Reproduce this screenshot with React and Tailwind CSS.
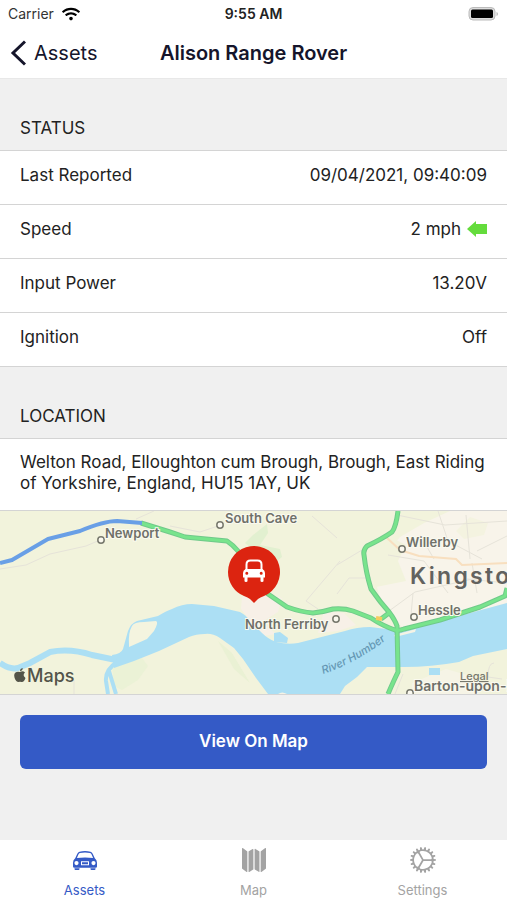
import { FaWifi } from "react-icons/fa";
import { IoIosCog, IoIosMap } from "react-icons/io";

const CarIcon = ({ className }) => (
  <svg className={className} viewBox="0 0 32 32" fill="currentColor" aria-hidden="true">
    <path
      fillRule="evenodd"
      d="M10.500 7.700Q16 6.300 21.500 7.700q1.500.5 2.300 2.300l2 4.300q2.200 1.700 2.200 4.500v3.700q0 1.300-1.500 1.300H5.500Q4 23.800 4 22.500v-3.700q0-2.800 2.200-4.500l2-4.300q.8-1.800 2.300-2.300zm.4 1.400q-1 .3-1.500 1.400l-1.500 3.400q8.100-1 16.200 0l-1.500-3.400q-.5-1.100-1.500-1.400-5.100-1-10.200 0zM7.500 17a2.100 2.100 0 1 0 0 4.200 2.100 2.100 0 0 0 0-4.200zm17 0a2.100 2.100 0 1 0 0 4.200 2.100 2.100 0 0 0 0-4.200zM12 17.200v4h8v-4zm1 1h6v2h-6z"
    />
    <path d="M5.500 24.300h5v.7q0 1-1 1h-3q-1 0-1-1zm16 0h5v.7q0 1-1 1h-3q-1 0-1-1z" />
  </svg>
);

const statusRows = [
  { label: "Last Reported", value: "09/04/2021, 09:40:09" },
  { label: "Speed", value: "2 mph", heading: true },
  { label: "Input Power", value: "13.20V" },
  { label: "Ignition", value: "Off" },
];

const tabs = [
  { name: "Assets", icon: CarIcon, active: true },
  { name: "Map", icon: IoIosMap },
  { name: "Settings", icon: IoIosCog },
];

const towns = [
  { name: "Newport", cx: 101, cy: 29, x: 105, y: 27 },
  { name: "South Cave", cx: 220, cy: 14, x: 225, y: 12 },
  { name: "North Ferriby", cx: 336, cy: 108, x: 245, y: 118 },
  { name: "Willerby", cx: 402, cy: 38, x: 406, y: 36 },
  { name: "Hessle", cx: 414, cy: 106, x: 418, y: 104 },
  { name: "Barton-upon-Humber", cx: 410, cy: 182, x: 414, y: 180, large: true },
];

const motorway =
  "M141 12l29 9 15 5 42 4q6 4 11 10l30 43 19 13q14 5 26 6 10-1 20-4 11-1 20 2l18 7q12 8 24 12 4 1 9-1l36-9 40-13 25-11 2-8";
const bridgeRoad =
  "M398 0q-2 16-6 21-10 7-25 14-4 4-3 9 2 18 7 34 9 13 18 23 6 8 8 14l1 46q-4 8-10 22M389 102l-8 6";

const StatusBar = () => (
  <div className="grid h-7 grid-cols-3 items-center px-2 text-sm">
    <span className="flex items-center gap-2 text-[#333]">
      Carrier
      <FaWifi className="h-4 w-[18px] text-black" />
    </span>
    <span className="text-center font-semibold text-[#222]">9:55 AM</span>
    <svg className="h-4 w-8 justify-self-end" viewBox="0 0 32 16" aria-label="Battery">
      <rect x="2" y="1.500" width="26" height="12.500" rx="4" fill="#ddd" stroke="#bbb" strokeWidth="1" />
      <rect x="4" y="3.500" width="22" height="8.500" rx="1.500" fill="#000" />
      <path d="M29.500 6v4q1.500-.6 1.500-2t-1.500-2z" fill="#bbb" />
    </svg>
  </div>
);

const SectionTitle = ({ children }) => (
  <h2 className="px-5 pt-[37px] pb-[10px] text-[17px] leading-6 text-[#222]">{children}</h2>
);

const CarPin = () => (
  <g>
    <path d="M228 61a26 26 0 1 1 36 24q-4 1.500-6 3l-4 4-4-4q-2-1.500-6-3a26 26 0 0 1-16-24z" fill="#dc2410" />
    <path
      d="M246.500 59v-5.500q0-4 4-4h7q4 0 4 4V59"
      fill="none"
      stroke="#fff"
      strokeWidth="2"
    />
    <path
      fill="#fff"
      fillRule="evenodd"
      d="M245.500 58h17q2.500 1.500 2.500 4v4.500h-1.500v3.500q0 1-1.500 1t-1.500-1v-3.500h-13v3.500q0 1-1.500 1t-1.500-1v-3.500H243V62q0-2.500 2.500-4zm1.300 2.800a1.500 1.500 0 1 0 0 3 1.500 1.500 0 0 0 0-3zm14.400 0a1.500 1.500 0 1 0 0 3 1.500 1.500 0 0 0 0-3z"
    />
  </g>
);

const AssetMap = () => (
  <svg
    className="block h-[183px] w-full"
    viewBox="0 0 507 183"
    preserveAspectRatio="xMidYMid slice"
    role="img"
    aria-label="Map of the asset location"
  >
    <rect width="507" height="183" fill="#f2f3dc" />

    {/* built up areas and woodland */}
    <path d="M400 26l24-14 26-12h57v92l-100 28-12-10-16-26-6-24 10-14z" fill="#f8f4ea" />
    <path d="M366 40l24-14 16 8-8 16 8 20-30 6z" fill="#f2f3dc" />
    <path d="M456 20l14-14 18 6-4 12-20 4z" fill="#f4f3e0" />
    <path d="M242 86l20-5 20 6-4 14-16 10 14 12-12 2-16-18-7-9zM324 100l20 2 12 12-18 6-20 2z" fill="#f7f0e7" />
    <path d="M412 172l34-14 28 8 6 17h-68z" fill="#f6f4e6" />
    <path d="M245 32l8-8 14-11 1 9-8 12 20 4 2 8-10 8z" fill="#e2f0d0" />
    <path d="M112 155l30-8 6 8-10 14-16 10-8-4z" fill="#ebf2d6" />
    <path d="M218 130l14 12 18 30-16-14z" fill="#eaf1d4" />

    {/* minor roads */}
    <g fill="none" stroke="#e6e3d9" strokeWidth="1">
      <path d="M0 58l26-4 24-11 36-8 14-6M136 8l18-8M170 15l30 6 18-6M312 5l25 22M340 50l-34 40 12 8" />
      <path d="M337 54l50-30M337 83l12-16h22M397 4l48 10 62-4M388 44l36 6 24 32M420 24l14 24M438 0l10 30 34 18M466 4l4 44M507 25l-30 15M389 100l26-19 62-14M413 82l-2 22M477 82l-5-30M507 72l-40-4" />
      <path d="M395 183l8-20M494 152q-6 0-6 14l14 2M74 169v14" />
    </g>
    <path d="M386 26l14 13 19 6 37 3 6 6 45-2" fill="none" stroke="#f8dfbf" strokeWidth="2" />

    {/* estuary with its island and side channels */}
    <path
      d="M112 144q9-1 11-6l5-18q3-8 9-10l21-5q8-5 14-7 10-5 20-5l22 2 26 6q6 3 9 8l13 13q6 6 14 9 12 3 22 1l47-12q12-4 25-4l25 3 15-1 60-16 37-10v46l-34 7-14 6q-28 5-55 5h-37l-10 10-12 9-5 8h-72l-12-16-13-19-9-11-14-10q-8-5-15-4-9 0-16 3l-30 14-25 10-20 7z"
      fill="#acdff4"
    />
    <path d="M129 134q-1-12 3-19 2-4 12-4l12-1q3 1-2 10l-7 8q-9 4-18 8z" fill="#f4f4df" />
    <g fill="none" stroke="#acdff4">
      <path d="M0 152q10 7 18 5l12-5 20-11q20-4 42 3l24 5" strokeWidth="6" />
      <path d="M117 151q-12 8-11 19l2 13M109 160l7 23" strokeWidth="4" />
    </g>
    <path d="M274 122l6-1 8 6-1 5-13-1zM429 157h11v7h-11z" fill="#acdff4" />
    <path d="M278 183q4-3 9 0zM394 124l22-6-1 3-20 5z" fill="#f5f3e5" />

    {/* main roads */}
    <g fill="none" strokeLinejoin="round">
      <g stroke="#70c98a" strokeWidth="5">
        <path d={motorway} />
        <path d={bridgeRoad} />
      </g>
      <g stroke="#78e48c" strokeWidth="3">
        <path d={motorway} />
        <path d={bridgeRoad} />
      </g>
      <path d="M376 107l6 1" stroke="#f4cc5e" strokeWidth="4" />
      <path d="M0 52l12-3 36-21 32-8q24-10 37-10l25 2" stroke="#699fe6" strokeWidth="4" />
    </g>

    {towns.map((town) => (
      <g key={town.name}>
        <circle cx={town.cx} cy={town.cy} r="3.200" fill="#fbf9ef" stroke="#77786d" strokeWidth="1.500" />
        <text
          x={town.x}
          y={town.y}
          className={`fill-[#6f7069] stroke-[#fafaf0] stroke-2 font-semibold [paint-order:stroke] ${town.large ? "text-sm" : "text-[13px]"}`}
        >
          {town.name}
        </text>
      </g>
    ))}
    <text x="410" y="73" className="fill-[#62625f] text-[23px] font-semibold tracking-widest">
      Kingston upon Hull
    </text>
    <path id="humber" d="M323 163q31-10 62-33" fill="none" />
    <text className="fill-[#6497b3] text-[11px] font-medium italic">
      <textPath href="#humber">River Humber</textPath>
    </text>

    <CarPin />

    <path
      transform="translate(14 157)"
      fill="#535449"
      d="M6 4q3-1.500 5 .5-3 2.500.5 5.500-1.500 4.500-4 4-1.500-.6-3 0Q2 14 .6 10-.8 5 2.600 4q1.400-.4 3.400 0zM6 3.200Q6 .5 8.700 0 8.800 2.700 6 3.200z"
    />
    <text x="27" y="171" className="fill-[#535449] text-lg font-medium">Maps</text>
    <a href="#legal">
      <text x="460" y="169" className="fill-[#77786d] text-[11px] font-medium underline">Legal</text>
    </a>
  </svg>
);

const App = () => {
  return (
    <div className="flex min-h-screen flex-col bg-[#f0f0f0] font-['Inter',sans-serif]">
      <header className="border-b border-[#e8e8e8] bg-white">
        <StatusBar />
        <div className="grid h-[50px] grid-cols-[1fr_auto_1fr] items-center px-2 text-xl text-[#15152b]">
          <button type="button" className="flex items-center gap-2">
            <svg className="h-7 w-[18px]" viewBox="0 0 18 28" fill="none" stroke="currentColor" strokeWidth="3">
              <path d="M17 2.500L5 14 17 25.500" />
            </svg>
            Assets
          </button>
          <h1 className="font-semibold">Alison Range Rover</h1>
        </div>
      </header>

      <main className="flex-1">
        <SectionTitle>STATUS</SectionTitle>
        <dl className="divide-y divide-[#d4d4d4] border-y border-[#d4d4d4] bg-white text-[17px] text-[#222]">
          {statusRows.map((row) => (
            <div key={row.label} className="flex justify-between px-5 pt-3 pb-[17px] leading-6">
              <dt>{row.label}</dt>
              <dd className="flex items-center gap-1.5">
                {row.value}
                {row.heading && (
                  <svg className="h-[18px] w-5" viewBox="0 0 20 18" fill="#64dc3c" aria-label="Heading west">
                    <path d="M0 9l9-8v3h11v10H9v3z" />
                  </svg>
                )}
              </dd>
            </div>
          ))}
        </dl>

        <SectionTitle>LOCATION</SectionTitle>
        <section className="border-y border-[#d4d4d4] bg-white">
          <p className="border-b border-[#d4d4d4] px-5 pt-[13px] pb-4 text-[17px] leading-[21px] text-[#222]">
            Welton Road, Elloughton cum Brough, Brough, East Riding of Yorkshire, England, HU15 1AY, UK
          </p>
          <AssetMap />
        </section>

        <div className="p-5">
          <button type="button" className="h-[54px] w-full rounded-md bg-[#345ac6] text-[17px] font-semibold text-white">
            View On Map
          </button>
        </div>
      </main>

      <nav className="grid grid-cols-3 bg-white pt-1">
        {tabs.map(({ name, icon: Icon, active }) => (
          <a
            key={name}
            href={`#${name.toLowerCase()}`}
            className={`flex h-14 flex-col items-center gap-1 text-[13px] leading-5 ${active ? "text-[#345ac6]" : "text-[#a3a3a3]"}`}
          >
            <Icon className="size-8" />
            {name}
          </a>
        ))}
      </nav>
    </div>
  );
};

export default App;
